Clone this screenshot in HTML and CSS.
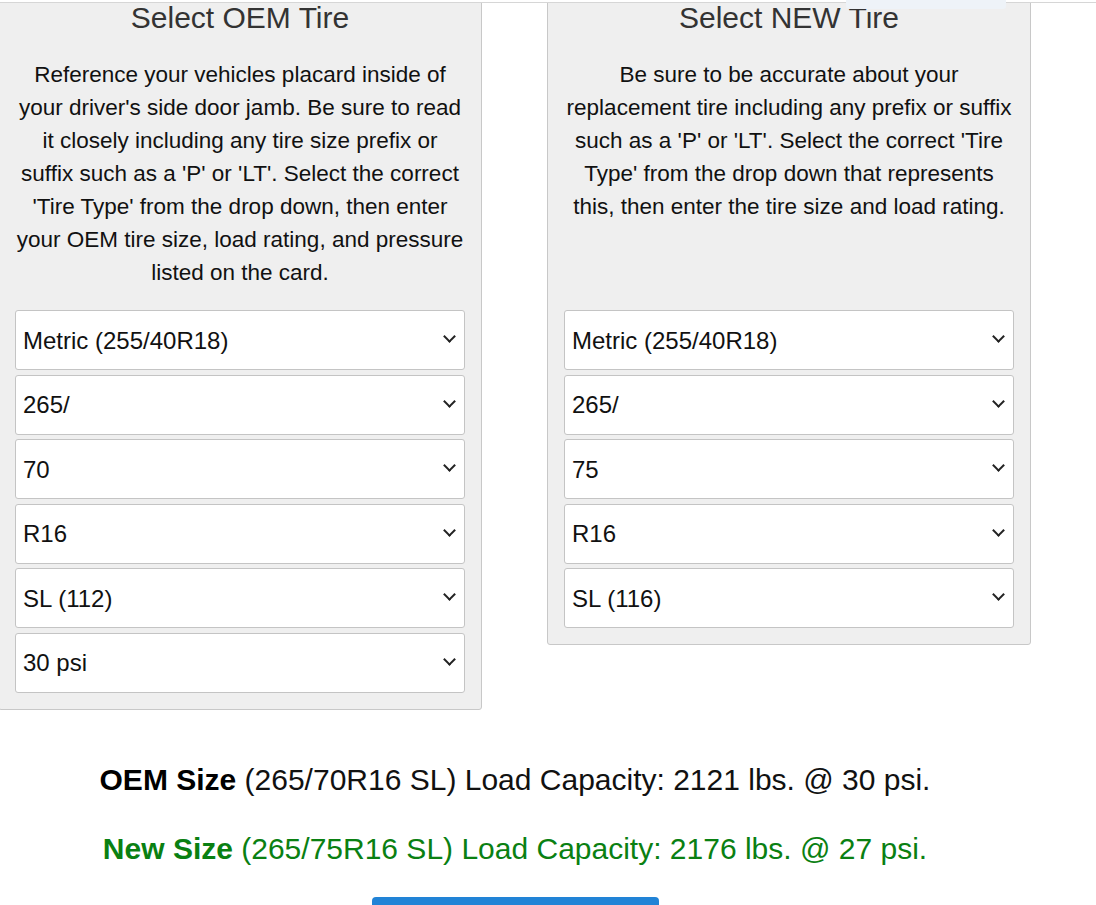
FILE: index.html
```html
<!DOCTYPE html>
<html lang="en">
<head>
<meta charset="utf-8">
<title>Tire Size Calculator</title>
<link rel="stylesheet" href="styles.css">
</head>
<body>
<div class="topbar"><span class="tip"></span></div>
<main class="calc">
  <div class="panels">
    <section class="panel">
      <h2 class="panel-title">Select OEM Tire</h2>
      <p class="panel-text">Reference your vehicles placard inside of your driver's side door jamb. Be sure to read it closely including any tire size prefix or suffix such as a 'P' or 'LT'. Select the correct 'Tire Type' from the drop down, then enter your OEM tire size, load rating, and pressure listed on the card.</p>
      <div class="field"><select><option>Metric (255/40R18)</option></select></div>
      <div class="field"><select><option>265/</option></select></div>
      <div class="field"><select><option>70</option></select></div>
      <div class="field"><select><option>R16</option></select></div>
      <div class="field"><select><option>SL (112)</option></select></div>
      <div class="field"><select><option>30 psi</option></select></div>
    </section>
    <section class="panel">
      <h2 class="panel-title">Select NEW Tire</h2>
      <p class="panel-text">Be sure to be accurate about your replacement tire including any prefix or suffix such as a 'P' or 'LT'. Select the correct 'Tire Type' from the drop down that represents this, then enter the tire size and load rating.</p>
      <div class="field"><select><option>Metric (255/40R18)</option></select></div>
      <div class="field"><select><option>265/</option></select></div>
      <div class="field"><select><option>75</option></select></div>
      <div class="field"><select><option>R16</option></select></div>
      <div class="field"><select><option>SL (116)</option></select></div>
    </section>
  </div>
  <div class="results">
    <p class="result"><b>OEM Size</b> (265/70R16 SL) Load Capacity: 2121 lbs. @ 30 psi.</p>
    <p class="result result-new"><b>New Size</b> (265/75R16 SL) Load Capacity: 2176 lbs. @ 27 psi.</p>
    <button class="btn" type="button">Calculate</button>
  </div>
</main>
</body>
</html>
```

FILE: styles.css
```css
html, body {
  margin: 0;
  padding: 0;
  background: #fff;
}
body {
  font-family: "Liberation Sans", Arial, sans-serif;
  color: #111;
  overflow: hidden;
}
.topbar {
  position: fixed;
  top: -40px;
  left: 0;
  right: 0;
  height: 42px;
  border-bottom: 1px solid #d6d6d6;
  background: #fff;
  z-index: 5;
}
.tip {
  position: absolute;
  left: 846px;
  bottom: -7px;
  width: 160px;
  height: 9px;
  background: #eef3f8;
  border-radius: 0 0 3px 3px;
}
.calc {
  width: 1034px;
  margin-left: -2px;
  margin-top: -31px;
}
.panels {
  display: flex;
  align-items: flex-start;
  gap: 65px;
}
.panel {
  width: 450px;
  padding: 0 16px 16px;
  background: #efefef;
  border: 1px solid #c8c8c8;
  border-radius: 3px;
  display: flex;
  flex-direction: column;
  align-items: stretch;
}
.panel-title {
  margin: 32px 0 0;
  font-size: 30px;
  font-weight: normal;
  line-height: 32px;
  text-align: center;
  color: #333;
}
.panel-text {
  margin: 24px 0 21px;
  min-height: 231px;
  font-size: 22.5px;
  line-height: 33px;
  text-align: center;
  color: #111;
}
.field {
  position: relative;
  height: 60px;
  margin: 0 0 4.6px;
}
.field:last-child {
  margin-bottom: 0;
}
.field select {
  appearance: none;
  -webkit-appearance: none;
  display: block;
  box-sizing: border-box;
  width: 100%;
  height: 60px;
  margin: 0;
  padding: 0 36px 0 7px;
  font-family: "Liberation Sans", Arial, sans-serif;
  font-size: 24px;
  color: #111;
  background: #fff;
  border: 1px solid #c4c4c4;
  border-radius: 3px;
}
.field::after {
  content: "";
  position: absolute;
  right: 11px;
  top: 22px;
  width: 7px;
  height: 7px;
  border-right: 2px solid #222;
  border-bottom: 2px solid #222;
  transform: rotate(45deg);
  pointer-events: none;
}
.results {
  display: flex;
  flex-direction: column;
  align-items: center;
  padding-top: 54px;
}
.result {
  margin: 0 0 38px;
  font-size: 30px;
  line-height: 31px;
  color: #111;
}
.result b {
  color: #000;
}
.result-new,
.result-new b {
  color: #0a8012;
}
.result-new {
  margin-bottom: 33px;
}
.btn {
  width: 287px;
  height: 50px;
  border: none;
  border-radius: 4px;
  background: #2183d6;
  color: #fff;
  font-family: "Liberation Sans", Arial, sans-serif;
  font-size: 22px;
}
```
